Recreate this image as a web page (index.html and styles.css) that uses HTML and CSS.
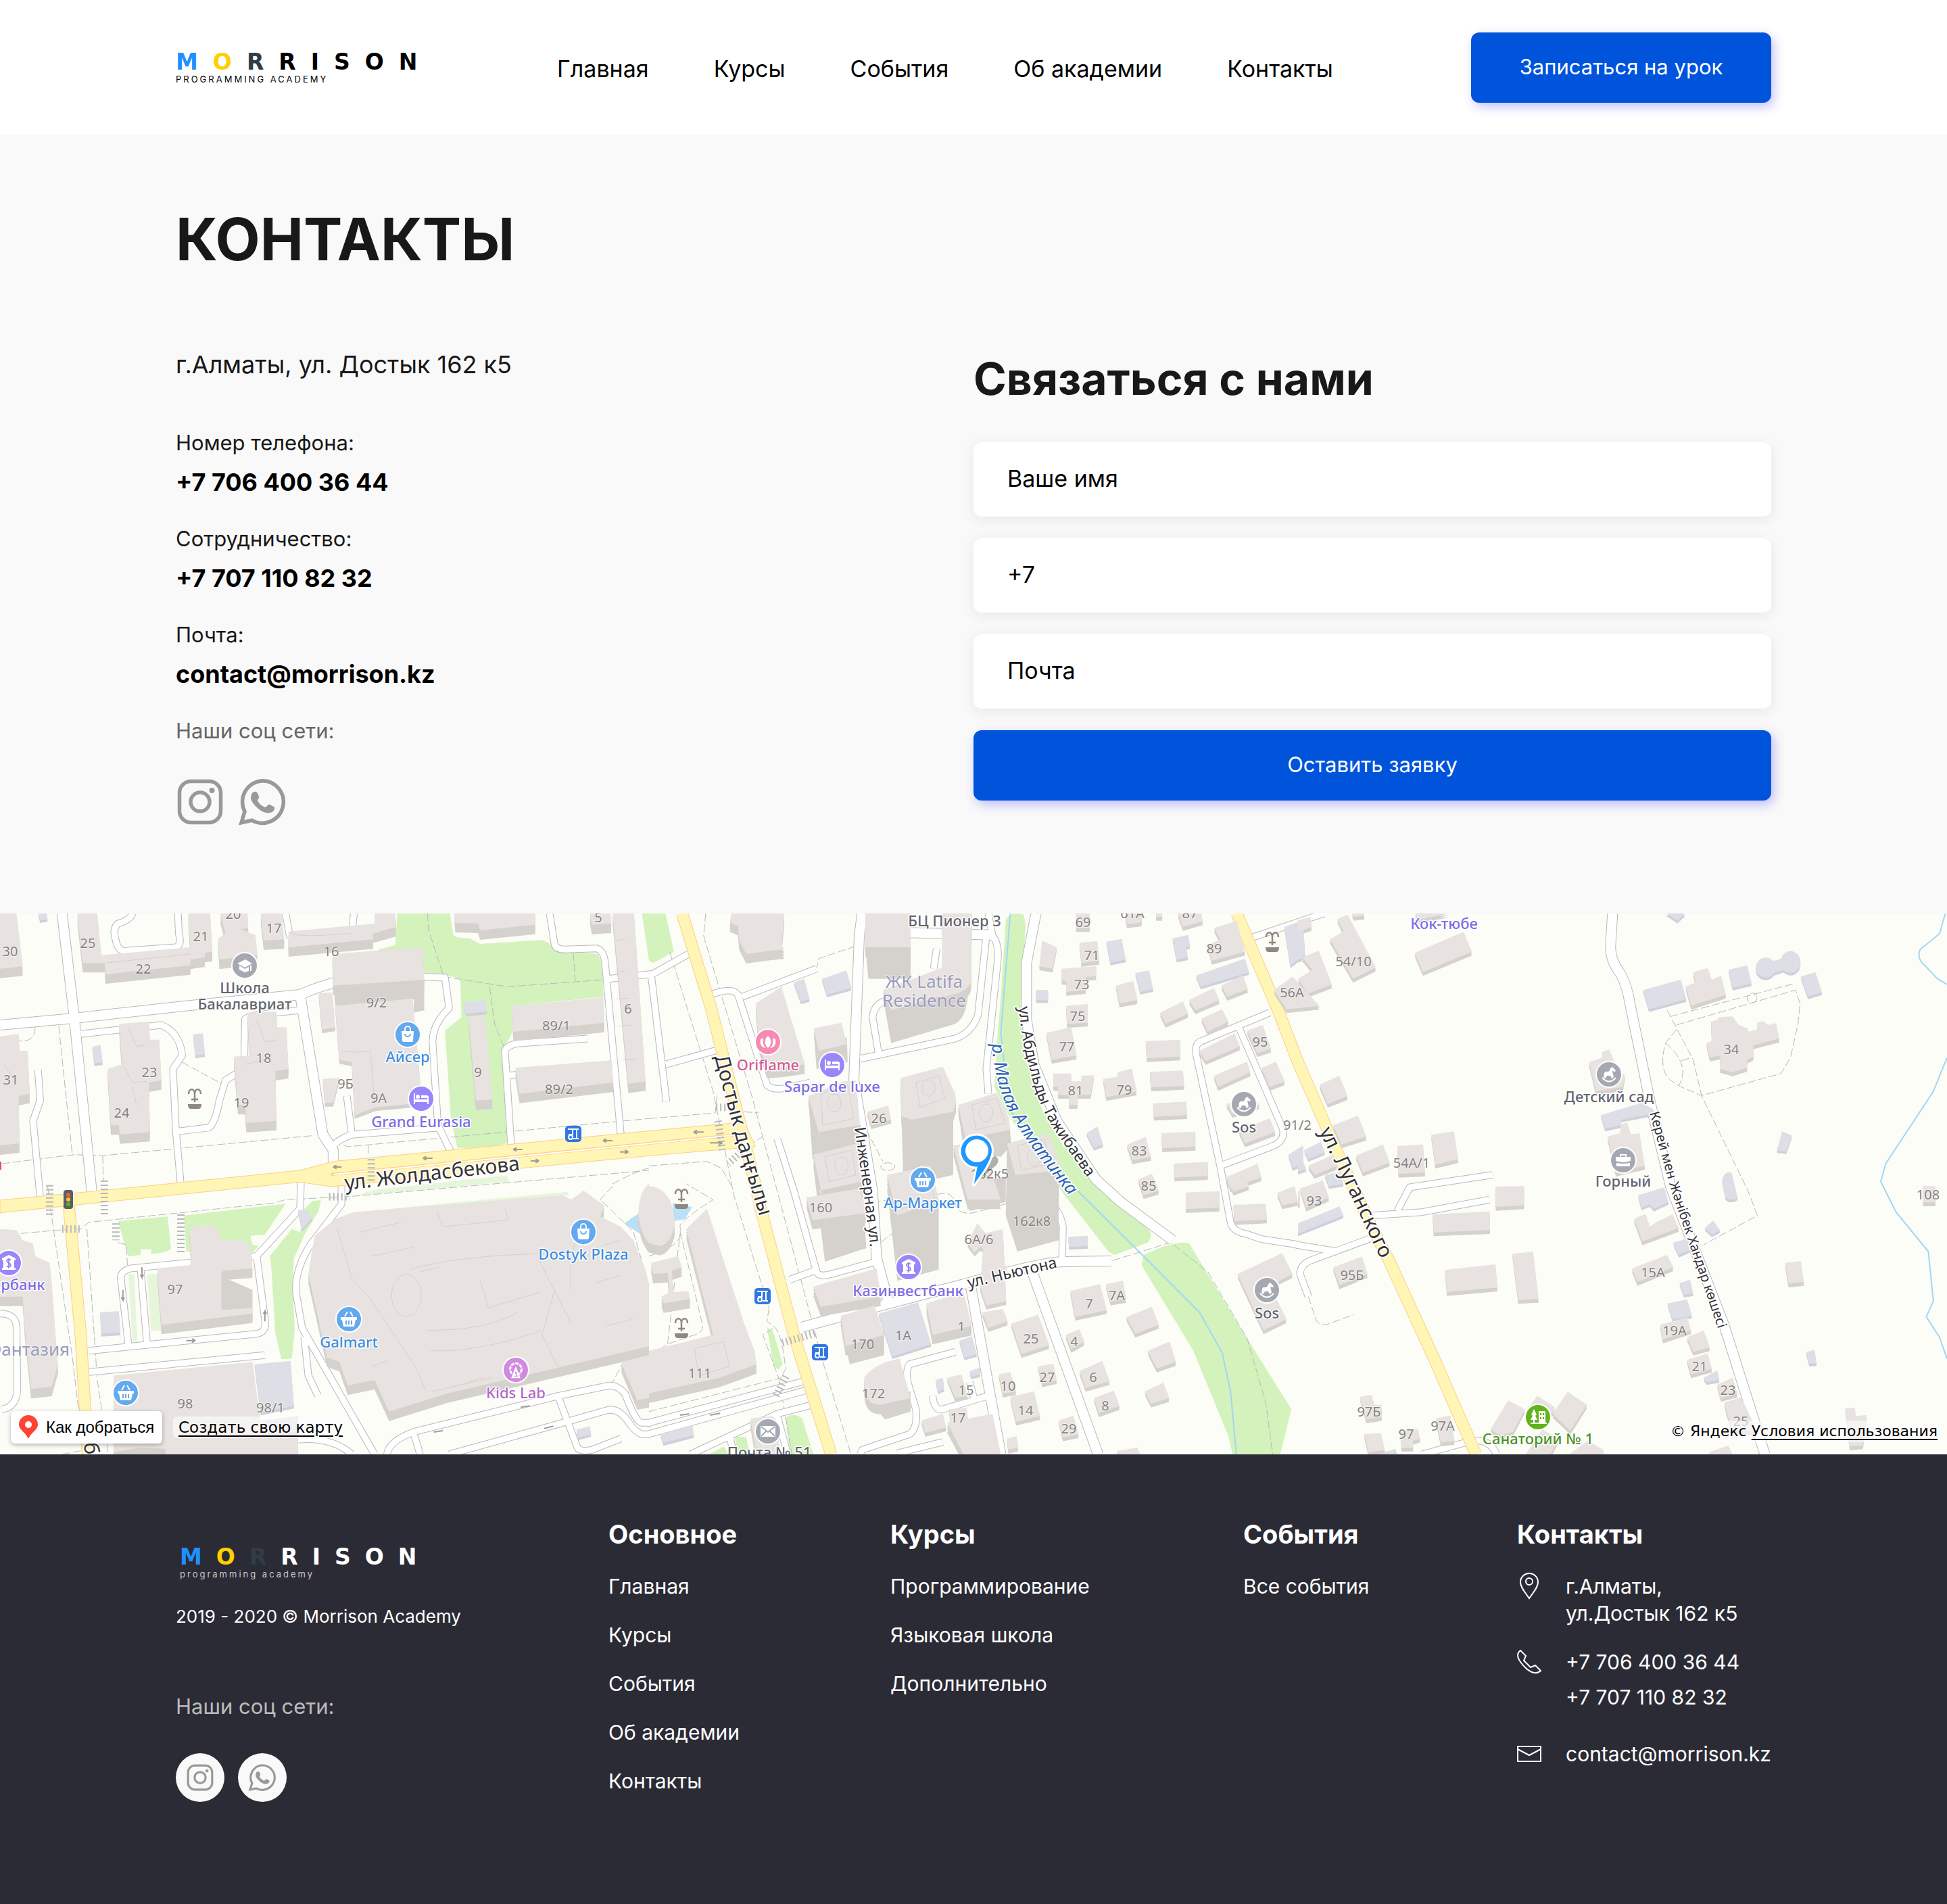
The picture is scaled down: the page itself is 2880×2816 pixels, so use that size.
FILE: index.html
```html
<!DOCTYPE html>
<html lang="ru">
<head>
<meta charset="utf-8">
<meta name="viewport" content="width=device-width, initial-scale=1">
<title>Контакты — Morrison Academy</title>
<link rel="stylesheet" href="styles.css">
</head>
<body>
<svg class="sprite" aria-hidden="true">
  <symbol id="i-instagram" viewBox="0 0 72 72"><g fill="none" stroke="currentColor"><rect x="5.500" y="5.500" width="61" height="61" rx="17" stroke-width="5.500"/><circle cx="36" cy="36" r="14" stroke-width="5.500"/></g><circle cx="53.500" cy="19" r="4" fill="currentColor"/></symbol>
  <symbol id="i-whatsapp" viewBox="0 0 72 72"><path d="M36 4.700a31.300 31.300 0 1 1-15.500 58.500L5 66.700l5-16.500A31.300 31.300 0 0 1 36 4.700Z" fill="none" stroke="currentColor" stroke-width="5.500"/><path d="M21 23c2-3 6-3 8 0l2 5c1 2-2 4-2 6 2 5 7 8 11 10 3 0 4-5 7-4l6 3c2 1 1 5 0 6-3 3-7 4-12 3-9-2-22-15-22-22 0-3 1-5 2-7Z" fill="currentColor"/></symbol>
  <symbol id="p-bag" viewBox="-18 -18 36 36"><path fill="#fff" d="M-9-5H9L8 9q0 2-2 2H-6q-2 0-2-2Z"/><path fill="none" stroke="#fff" stroke-width="2" d="M-4-5v-3a4 4 0 0 1 8 0v3"/><path fill="none" stroke="#62a9ee" stroke-width="2" d="M-4-1a4 4 0 0 0 8 0"/></symbol>
  <symbol id="p-basket" viewBox="-18 -18 36 36"><path fill="#fff" d="M-12-3H12V1H10L8 11H-8L-10 1h-2Z"/><path stroke="#fff" stroke-width="2" d="M-6-4l4-7M6-4l-4-7"/><path stroke="#62a9ee" stroke-width="2" d="M-4 2v6M0 2v6M4 2v6"/></symbol>
  <symbol id="p-bed" viewBox="-18 -18 36 36"><path fill="#fff" d="M-11-8h2V1H9v-5h2V8H9V5H-9v3h-2ZM0-5h8q3 0 3 4H0Z"/><circle cx="-5" cy="-3" r="3" fill="#fff"/></symbol>
  <symbol id="p-bank" viewBox="-18 -18 36 36"><path fill="#fff" d="M-10-7L0-12 10-7v3H8V7h2v3h-20V7h2V-4h-2Z"/><path fill="none" stroke="#9a86fb" stroke-width="2" d="M3-4C2-6-3-6-3-3S3 0 3 3-2 6-3 4M0-7V8"/></symbol>
  <symbol id="p-cap" viewBox="-18 -18 36 36"><path fill="#fff" d="M-11-3L1-9 11-3 0 3ZM-8 0l8 5 6-3v6L0 10l-8-4ZM8 0h2v8H8Z"/></symbol>
  <symbol id="p-horse" viewBox="-18 -18 36 36"><path fill="#fff" d="M2-9l3-2 5 5-1 2-4-1 2 9-3 2-2-4h-5l-2 4-3-1 1-7q1-3 5-2 3 0 4-5Z"/><path fill="none" stroke="#fff" stroke-width="2" d="M-10 5q10 11 20 0"/></symbol>
  <symbol id="p-case" viewBox="-18 -18 36 36"><path fill="#fff" d="M-11-5h22V1L2 3H-2l-9-2ZM-10 4l8 1h4l8-1v5h-20Z"/><path fill="none" stroke="#fff" stroke-width="2" d="M-4-5v-3h8v3"/></symbol>
  <symbol id="p-mail" viewBox="-18 -18 36 36"><path fill="#fff" d="M-11-8h22V8h-22Z"/><path fill="none" stroke="#a4a9b1" stroke-width="2" d="M-10-7L0 1 10-7M-10 7l7-7M10 7L3 0"/></symbol>
  <symbol id="p-wheel" viewBox="-18 -18 36 36"><circle cy="-1" r="8.500" fill="none" stroke="#fff" stroke-width="3" stroke-dasharray="5 1.500"/><path fill="none" stroke="#fff" stroke-width="2.500" d="M-5 11L0-2 5 11Z"/></symbol>
  <symbol id="p-tulip" viewBox="-18 -18 36 36"><path fill="#fff" d="M0-9q9 9 0 18Q-9 0 0-9ZM-7-6q-2 10 4 15-10-1-8-13ZM7-6q2 10-4 15 10-1 8-13Z"/></symbol>
  <symbol id="p-park" viewBox="-18 -18 36 36"><path fill="#fff" d="M-6-12l4 8-2 2 3 6h-4v4h6V-9H11V8h2v2h-24V8h4V4h-4l3-6-2-2Z"/><path stroke="#62b31b" stroke-width="2" stroke-dasharray="3 3" d="M4-6V5M8-6V5"/></symbol>
  <symbol id="p-fountain" viewBox="-15 -20 30 40"><path fill="none" stroke="#8f8781" stroke-width="2.500" d="M-9-6c0-9 9-9 9 0v12M9-6c0-9-9-9-9 0M-5 2H5"/><path fill="#8f8781" d="M-10 9h20q0 7-4 7H-6q-4 0-4-7Z"/></symbol>
  <symbol id="p-bus" viewBox="-12 -12 24 24"><rect x="-12" y="-12" width="24" height="24" rx="5" fill="#3176e3"/><path fill="none" stroke="#fff" stroke-width="2" d="M-8-7H8M5-7V6M0 7h8M-1-7v8h-6"/><circle cx="-4" cy="5" r="3" fill="none" stroke="#fff" stroke-width="2"/></symbol>
</svg>

<header class="header">
  <div class="container header-row">
    <a class="logo" href="#"><span class="logo-name"><span class="c-blue">M</span><span class="c-yellow">O</span><span class="c-slate">R</span>RISON</span><span class="logo-sub">PROGRAMMING ACADEMY</span></a>
    <nav class="nav">
      <a href="#">Главная</a><a href="#">Курсы</a><a href="#">События</a><a href="#">Об академии</a><a href="#">Контакты</a>
    </nav>
    <button class="btn" type="button">Записаться на урок</button>
  </div>
</header>

<main class="main">
  <div class="container">
    <h1 class="title">КОНТАКТЫ</h1>
    <div class="contact-row">
      <section class="info">
        <p class="address">г.Алматы, ул. Достык 162 к5</p>
        <dl class="details">
          <dt>Номер телефона:</dt><dd><a href="tel:+77064003644">+7 706 400 36 44</a></dd>
          <dt>Сотрудничество:</dt><dd><a href="tel:+77071108232">+7 707 110 82 32</a></dd>
          <dt>Почта:</dt><dd><a href="mailto:contact@morrison.kz">contact@morrison.kz</a></dd>
        </dl>
        <p class="social-title">Наши соц сети:</p>
        <div class="social">
          <a href="#" aria-label="Instagram"><svg><use href="#i-instagram"/></svg></a>
          <a href="#" aria-label="WhatsApp"><svg><use href="#i-whatsapp"/></svg></a>
        </div>
      </section>
      <form class="form">
        <h2>Связаться с нами</h2>
        <input type="text" aria-label="Ваше имя" placeholder="Ваше имя">
        <input type="tel" aria-label="Телефон" value="+7">
        <input type="email" aria-label="Почта" placeholder="Почта">
        <button class="btn" type="submit">Оставить заявку</button>
      </form>
    </div>
  </div>
</main>

<section class="map" aria-label="Карта">
<svg class="map-svg" viewBox="0 0 2880 800" preserveAspectRatio="xMidYMid slice">
<g class="geo" transform="scale(.61224 .33333) translate(0 -30)">
  <g fill="#d3f2bc">
    <path d="M960 30H1087L1095 125Q1100 140 1135 140L1160 165 1310 148Q1330 160 1340 195L1445 210 1455 260 1458 400 1237 440V560L1215 640 1225 1050Q1180 1072 1105 1070L1090 950 1075 550 1115 490 1112 320 1070 300 940 280Q915 270 915 190L955 170Z"/>
    <path d="M1551 30H1608L1628 200 1578 250 1568 240Z"/>
    <g transform="translate(1568 0)"><path d="M862 60Q870 20 905 35L910 80 900 400 905 650 950 900 1000 1060 1110 1240 1205 1430Q1220 1455 1205 1490L1125 1545 1110 1530 1000 1270 930 1090 860 900 835 800 840 620 850 400Z"/><path d="M1240 1510Q1290 1480 1305 1495L1445 1915 1552 2230 1525 2430H1410L1400 2350 1315 1970 1190 1590 1195 1545Z"/>
      <path d="M285 1865L300 1885 323 2030 312 2055 300 2030ZM330 2270Q345 2240 370 2270L397 2430H342ZM208 2350L235 2355 243 2430H212ZM145 2430L180 2395 193 2430Z"/></g>
    <g transform="translate(0 1230)"><path d="M285 165L405 145 413 285Q410 305 365 310V290H340V315L310 322ZM445 140L690 88 640 225 605 230 610 270 625 275 610 305 450 300ZM755 75L775 72 770 120 740 210 710 330 707 450 712 650 705 775 680 778 665 660 655 350 652 320 705 200 725 215 730 160 720 140Z"/><path fill="#e6f6db" d="M355 400L380 400 390 650 365 650ZM860 52L900 28 1225-38 1230-10ZM860 130L1000 100 1370 35 1375 50 960 120ZM310 400h14l8 300h-12Z"/></g>
  </g>
  <g fill="#b8e0f7"><path d="M1568 1330L1508 1405 1545 1450 1568 1440ZM1625 1315L1672 1333 1655 1385 1628 1395Z"/></g>
  <g class="stream">
    <path d="M2441 30L2418 560 2438 900 2598 1250 2768 1560 2898 1800 2953 1980 2973 2150 2987 2430M4700 30L4686 120 4639 190Q4630 230 4650 260L4681 320 4704 345M4704 670L4671 820 4556 1140 4544 1220 4581 1355 4659 1530 4671 1750 4654 1820 4686 1910 4704 2005"/>
  </g>
  <g class="foot">
    <path d="M1033 30L1035 100 1072 310 1225 355 1568 310M1385 205L1390 330M1183 355L1195 520 1217 620M440 690L535 785M142 530L160 850 175 1105M5 1140L180 1100 245 1105 760 1015M248 1105L250 1220M805 1040L840 1065 1220 1000 1568 940M85 535Q85 590 60 595L0 600M890 1060V1100M50 1450L140 1435 195 1430 215 1400 660 1315 690 1300 850 1285 1568 1170M115 1240L130 1440 175 2000 190 2240M210 1430L235 2100 262 2430M285 1490L305 1500 308 1590M1480 1230Q1540 1170 1568 1160M1480 1240L1450 1300 1530 1440 1555 1600 1568 1680M1568 2010L1500 2040 1480 2110M150 2430L205 2410"/>
    <g transform="translate(1568 0)"><path d="M137 30L132 130 250 850 420 2020 488 2430M50 200L155 820 205 1280 290 1780M0 940L160 915 165 830M500 175L410 230 405 270M230 910L265 915M0 1150L140 1130 175 1160 200 1240M240 1060L275 1020M525 990L565 1130M540 1310Q640 1290 720 1270Q740 1290 740 1320 750 1380 800 1350L940 1280M560 1490L700 1290M1120 1570L1260 1490 1350 1620 1445 1915 1490 2200 1507 2430M0 1550Q90 1500 75 1420 70 1400 155 1300L90 1230M75 1440L130 1860Q130 1890 110 1900L45 1940 0 2000M45 1940L75 1450M290 1780L285 1840 300 1860Q320 1880 330 2050L320 2090 0 2240M300 1870L275 1900 315 2100 345 2430"/><circle cx="577" cy="1153" r="17"/></g>
    <g transform="translate(3136 0)"><path d="M892 460L955 680 975 838 1167 740 1190 670 1208 520 1213 430 1202 370 910 527M1195 343L900 487M915 545L888 605Q870 720 900 770L920 795 975 838 1087 1260 1110 1370 980 1500M888 605Q950 700 920 795M927 683L950 670M25 1730L45 1840Q60 1865 75 1850L135 1810"/><ellipse cx="1097" cy="405" rx="12" ry="22"/></g>
  </g>
  <defs>
    <g id="r-small">
      <path d="M195 565L390 525Q435 560 440 660L418 720 425 995 437 1240M425 998L505 980Q520 960 530 860L545 770 590 720 592 500Q595 480 725 460M838 840L850 1010M805 1060Q820 1030 850 1012L1060 980M1328 30L1340 170Q1345 190 1365 190L1440 185Q1458 190 1462 250L1500 1015M1235 1065L1220 640Q1225 610 1260 605L1420 585M1228 750L1250 745M1470 320L1578 298 1663 210M1573 300L1610 865M1608 700L1735 635M320 30Q315 60 285 75 270 100 280 150 285 205 310 195L425 180Q440 170 432 120L430 30M690 30L700 130Q710 150 740 145L850 120 855 30M92 725L97 860 80 950 98 1310M870 312Q900 300 1075 315L1085 450Q1045 520 1045 600L1058 970 1090 1090"/>
      <g transform="translate(1568 0)"><path d="M225 400L405 275M150 390Q200 355 215 390L285 790Q295 815 330 805L390 780M820 30L830 130Q845 160 843 230L815 720 820 830M815 130L795 480Q780 560 740 585L510 675M555 655L540 490Q545 430 570 420M695 185L688 275M340 1655L400 1615M310 1030L350 1260 405 1620Q410 1645 440 1630L550 1575M998 1580L1000 1420Q995 1360 970 1310M740 1975L630 2030Q620 2050 625 2110L645 2230Q650 2310 630 2340L515 2410 510 2430M685 2170Q690 2240 710 2230L820 2170M775 2110L785 2180M710 2375L600 2425M385 2100L-5 2292M390 2140L-5 2342M395 2210L310 2250 100 2430M310 2260L335 2430M195 2350L205 2430M1460 135L1630 30M1500 470L1330 600Q1315 620 1325 680L1380 1150 1405 1400Q1410 1440 1440 1450L1480 1475 1570 1500M1425 535L1530 980Q1540 1030 1510 1060L1380 1150"/></g>
      <g transform="translate(3136 0)"><path d="M-5 1500L95 1530M185 1465L30 1570Q5 1590 5 1630L25 1730M180 1370L300 1355 462 1300M240 1350L270 1245 470 1190M300 2430L410 2375Q460 2350 480 2430"/></g>
      <g transform="translate(0 1230)"><path d="M727-10L725 110 620 320 315 375Q290 390 292 420L310 710M825-10V90L750 270Q712 380 715 480L730 640 905 1200M735 680L745 850 768 940M340 380L355 705M620 320L640 600Q645 660 620 665L215 740M215 835L640 760M0 575Q40 575 40 640L42 900Q42 990 5 1000M1573 1060L1550 1060Q1535 1055 1510 930 1490 890 1470 895L1350 940 1000 1100Q940 1140 935 1200M1573 1112L1550 1110Q1535 1100 1520 1060 1495 990 1465 1005L1370 1055 1085 1200M1350 950L1395 1170Q1400 1190 1430 1180L1500 1130M1000 1110L1015 1200M720 1135Q800 1120 850 1200M600 1150V1200"/></g>
    </g>
    <g id="r-mid">
      <path d="M150 30L178 470 205 960 222 1270M0 525L178 495 450 440 725 390Q800 330 880 310M725 390L780 1010 805 1080 805 1150"/>
      <g transform="translate(1568 0)"><path d="M515 30L508 130 495 770 540 1260 550 1560 580 1765M530 110L830 125M935 30L912 250 912 500 930 700 985 950 1080 1210 1140 1310 1265 1480M370 1865L580 1760 760 1675Q940 1580 1000 1575L1117 1572M778 1690L850 2430M920 1590L1085 2430"/></g>
      <g transform="translate(3136 0)"><path d="M760 30L755 180Q755 240 780 300 795 350 802 430L850 860 900 1240 1030 1860 1128 2430"/></g>
    </g>
    <g id="r-yellow">
      <path d="M165 1300L195 1900 212 2430M1648 30L1718 450 1818 1180 1838 1340 1918 1900 2008 2430M2988 30L3088 460 3136 690 3236 1110 3306 1390 3356 1570 3466 2010 3566 2430"/>
    </g>
    <g id="b-tall">
      <path d="M0 30H40L55 265 0 275ZM187 30H235L245 215 460 180 455 30H508L513 200 495 205V225L460 235V260L255 300 253 250 200 250ZM532 30H598L600 95 580 100 617 125 622 215 530 235 527 140 545 120ZM630 30H680L687 145 637 150ZM697 110L905 75V30H955L957 90 900 120 902 145 697 180ZM803 210L1022 180 1025 325 805 350ZM288 520L360 510 362 590 385 590 390 770 360 780 362 1000 290 1010 287 970H268L260 720 295 700ZM597 470L668 465 670 535H692L697 720 665 730 668 950 595 960 592 880H575L565 665 605 660ZM0 575L45 565 47 640H67L72 830 45 840 47 1050 0 1060ZM1132 490L1172 485 1190 855 1150 860ZM1237 440L1458 402 1460 515 1240 555ZM1245 715L1478 682 1482 780 1255 830ZM1480 30H1532L1560 775 1518 785ZM1425 30H1475L1477 75 1430 80ZM1098 30H1293V80L1160 105 1155 75 1100 72Z"/>
      <g transform="translate(1568 0)"><path d="M199 30H327L320 170 327 190 295 195 235 210 218 150 215 85 195 70ZM258 430L320 355 350 540 377 700 320 715 285 720 265 600ZM398 540L465 515 478 610 410 640ZM523 30H632V180H523ZM708 30H780L778 330Q770 390 700 400L585 460 565 370 710 270ZM385 840L470 775 500 770 510 970 410 1000ZM608 760L710 710 740 830 742 870 735 910 635 945 610 930ZM747 880L840 825 870 940 872 990 765 1030ZM865 1050L965 1005 990 1120V1170L885 1190ZM397 1100L505 1050 515 1220 410 1260 418 1280ZM575 1190L680 1150 700 1300 600 1370ZM463 1815L545 1770 568 1900 475 1950ZM520 2090Q540 2030 605 2005L632 2180 560 2210Q520 2210 520 2120ZM245 2270L300 2260 320 2430H260ZM735 1060L800 1040 850 1300 770 1300Z"/></g>
      <g transform="translate(0 1230)"><path d="M0 200L40 205 55 250 80 265 85 320 120 350 125 440 135 690 140 800 125 900 75 910 60 640 55 500 0 500ZM380 375L460 360 535 375V560L610 550V575L390 625ZM458 200Q470 180 520 185L535 250 590 250 607 275 610 375 540 385 480 500 465 480ZM760 230L810 155 855 125 950 110 1360 50 1380 70 1410 30 1460 95 1450 145 1500 190 1530 250 1560 380 1568 450V720L1500 750 1080 930 940 1010 905 870 840 895 820 790 790 770 745 400ZM275 850L610 790 640 1200 340 1170 275 1190ZM1542 130Q1545 30 1568 0V265Q1545 210 1542 130ZM1500 790L1568 760V950L1540 960ZM400 1140H430L540 1120 720 1110V1200H400Z"/></g>
      <g transform="translate(1568 1230)"><path d="M0 10Q30 10 50 70 62 120 62 190 50 270 25 275L0 262ZM90 200L140 110 230 620 255 740 260 800 170 860 0 930V780L0 740 155 670ZM5 350L70 320 80 370 55 385 60 480 95 475 100 510 35 530 30 500 50 480 45 395 10 400ZM380 60L510 20 525 130 395 160ZM397 455L550 375 560 500 415 545ZM670 530L760 480 780 630 685 670ZM720 1060L830 1020 850 1200H760Z"/></g>
    </g>
    <g id="b-low">
      <path d="M770 385L803 380 810 535 778 545ZM780 765L820 760 805 870 785 870ZM810 440L997 408 1020 870 907 890 857 925 850 690 820 680Z"/>
      <g transform="translate(1568 0)"><path d="M1032 30H1065V95H1032ZM1150 30H1190V70L1155 78ZM1278 30H1335L1338 65 1290 90ZM1225 30h15v15h-15ZM950 150L985 180 975 275 943 265ZM1040 160L1083 153 1088 240 1045 250ZM1365 95L1420 62 1430 130 1440 200 1360 240 1350 170 1380 145ZM997 275L1080 265V308L1055 312V370L1008 378V330L997 328ZM1128 350L1170 330 1180 415 1137 430ZM1235 470L1290 420 1303 475 1248 520ZM1305 415L1365 360 1378 415 1320 460ZM1335 495L1385 455 1400 510 1350 555ZM1383 350L1435 305 1447 365 1397 400ZM1008 440L1060 432V515L1010 520ZM960 560L1020 535 1033 660 973 680ZM1200 597L1283 590V665L1203 672ZM1330 640L1415 562 1428 620 1345 685ZM1445 550L1483 525 1503 630 1470 650ZM1210 733L1290 727 1293 795 1213 802ZM1365 750L1445 688 1453 735 1375 800ZM1480 715L1515 688 1536 775 1500 800ZM977 740H1020V775H1045V750L1075 748 1067 835H1035V880H1015V835H988V800H977ZM1097 765L1132 755V735L1167 718 1178 820 1105 845ZM1218 873L1298 865 1300 925 1220 932ZM1395 875L1460 840 1475 880 1410 920ZM1425 990L1500 940 1513 1000 1440 1050ZM1238 1005L1320 998V1065L1240 1072ZM1155 1055L1200 1022 1213 1110 1168 1125ZM1268 1140L1350 1132V1195L1270 1202ZM1395 1200L1470 1140 1480 1200 1405 1250ZM1182 1210L1215 1185 1232 1260 1195 1280ZM527 910L578 883 585 945 537 970ZM1510 370L1555 310 1620 440 1540 455Z"/></g>
      <g transform="translate(3136 0)"><path d="M0 60L30 45 33 90 0 110ZM95 55L120 35 188 270 133 320 77 145 110 110ZM130 30H160V40L135 45ZM10 225L50 195 82 345 25 385 0 320 35 280ZM283 30H365L290 58ZM282 205L400 112 420 200 302 290ZM955 290L990 272 1000 325 1022 305 1034 390 950 440 937 355 960 335ZM998 510L1015 500V490L1050 487 1065 525 1087 540V555L1110 545V512L1125 508 1135 525 1155 517 1163 585 1100 615V665L1085 680V715L1050 735 1020 720V660L995 670 987 605 1000 595ZM703 690L735 670V645L752 633 765 690 790 750 785 800 720 820ZM52 790L100 750 120 840 72 875ZM85 970L145 927 165 1020 105 1055ZM140 1105L205 1055 222 1135 157 1180ZM240 1062L302 1055 307 1180 243 1185ZM322 1012L377 997 387 1120 332 1145ZM748 1020L778 1005 780 965 795 957 805 1010 825 1005 838 1150 768 1180ZM477 1242L546 1240V1325L478 1332ZM325 1365L463 1352 464 1435 328 1445ZM25 1150L85 1100 95 1150 40 1190ZM5 1250L60 1215 75 1290 20 1335ZM355 1612L477 1587 482 1690 360 1710ZM518 1540L568 1530 581 1740 532 1745ZM812 1385L840 1362 850 1420 865 1400 905 1365 920 1425 832 1485ZM807 1605L892 1545 907 1600 820 1665ZM85 1600L155 1552 168 1630 100 1680ZM875 1855L940 1822 950 1880 882 1920ZM940 1910L980 1880 995 1955 955 1975ZM940 2010L990 1983 1000 2050 950 2075ZM1013 2120L1050 2090 1062 2160 1022 2180ZM1030 2200L1070 2178 1090 2250 1110 2330 1050 2320 1035 2240ZM1177 1580L1215 1573 1222 1665 1185 1672ZM1510 1240h30v72h-30ZM1322 2225L1345 2223 1348 2260 1374 2255 1365 2390 1333 2395ZM150 2175L177 2165 185 2210 202 2210V2265L165 2275ZM160 2340L200 2335 210 2410 170 2420ZM248 2330L290 2315 295 2360 278 2370V2400H250ZM333 2270L368 2258 378 2370 345 2378ZM465 2320L508 2190 548 2230 520 2330 490 2345ZM555 2230L578 2170 620 2220 618 2240 600 2260 552 2270ZM615 2250L652 2152 698 2210 658 2325ZM550 2430L590 2320 630 2360 610 2430ZM655 2430L700 2370 738 2410V2430ZM993 2420L1040 2390 1050 2430H993ZM0 1260h4v60h-4Z"/></g>
      <g transform="translate(1568 1230)"><path d="M770 265L793 175 837 270 820 300 800 280 787 305ZM810 220L855 200 863 520 815 540 800 460ZM808 355L855 325 867 395 820 425ZM805 570L855 555 867 610 820 640ZM875 620L940 580 967 715 900 755ZM1018 475L1090 445 1106 560 1030 590ZM1104 445L1145 430 1153 510 1115 522ZM1007 670L1040 645 1052 700 1020 732ZM1153 590L1215 545 1232 625 1175 665ZM1040 830L1095 785 1113 875 1055 905ZM1205 740L1258 700 1273 790 1227 820ZM845 845L873 835 887 920 855 930ZM940 810L977 797 985 870 950 885ZM873 945L930 920 945 1030 887 1055ZM1075 950L1123 917 1137 985 1087 1018ZM1198 920L1243 882 1257 950 1213 975ZM990 1050L1025 1028 1038 1110 1000 1125ZM865 1130L888 1120 892 1170 868 1180ZM658 1050L710 1020 718 1080 668 1105ZM725 1000L767 992 772 1055 730 1070ZM720 860L755 845 770 940 740 950ZM1130 1185L1180 1170 1187 1200H1135ZM1297 38L1378 33V105L1297 112ZM1412 93L1490 88 1493 158 1415 165ZM1518 40L1560 10 1568 80 1530 95ZM1405 5L1440-20 1450 10 1412 35ZM1422 400L1530 307 1555 400 1500 450 1540 600 1485 650ZM150 640h4v4h-4Z"/></g>
    </g>
    <g id="b-lilac">
      <path d="M223 620L243 614 248 690 228 695ZM467 567L490 562 495 655 472 660ZM1120 425L1173 413 1177 465 1125 475ZM93 30H113L115 55 97 60ZM242 1800L287 1795 291 1890 245 1895ZM720 1345L740 1345 755 1380 730 1430ZM615 2030L702 2015 710 2215 630 2245ZM1393 2320L1425 2305 1428 2340 1398 2355ZM375 2335L720 2260V2330L375 2400Z"/>
      <g transform="translate(1568 0)"><path d="M350 335L375 320 388 410 367 420ZM418 320L477 283 489 360 430 390ZM1105 155L1142 143 1152 235 1115 248ZM1265 140L1303 125 1307 175 1298 180 1302 225 1275 235ZM1175 295L1208 282 1218 365 1187 378ZM1322 305L1440 230 1450 290 1333 355ZM935 370H964V415H935ZM1535 90L1580 60 1585 210 1550 260ZM1057 1005L1083 975 1097 1055 1075 1070ZM1013 1465L1060 1460V1505L1015 1510ZM555 1805L650 1755 682 1940 588 1995ZM750 1925L780 1905 792 1985 762 2000ZM775 2060L800 2045V2075L778 2085ZM693 2100L710 2090 713 2140 698 2150ZM28 2340L105 2300 108 2345 35 2380ZM1545 1100L1580 1060V1140L1555 1160Z"/></g>
      <g transform="translate(3136 0)"><path d="M0 140L15 190 10 230 0 235ZM834 370L925 323 938 410 848 455ZM1040 280L1085 260 1096 340 1050 360ZM1215 310L1250 290 1266 380 1232 398ZM732 925L830 870 860 900 850 920 780 945V970L742 985ZM1157 1080L1170 997 1193 1015 1180 1085ZM822 1280L885 1245 895 1310 860 1340 850 1320 830 1335ZM1025 1210Q1030 1170 1048 1180L1062 1290Q1045 1310 1033 1290ZM983 1425L1003 1392 1020 1435 1000 1455ZM907 1490L945 1470 950 1520 920 1545ZM922 1670L947 1655 955 1715 932 1722ZM893 1760L940 1742 952 1815 905 1830ZM1228 1975L1248 1967 1253 2025 1235 2028ZM980 2090L1013 2057 1018 2100 987 2110ZM0 1405L100 1330 110 1370 0 1450ZM15 1080L55 1043 65 1090 25 1120ZM0 1075L20 1165 0 1175ZM65 1190L100 1175 110 1230 75 1240ZM890 30H935L917 62ZM208 2420L235 2405 240 2430H210Z"/><ellipse cx="1130" cy="270" rx="24" ry="44"/><ellipse cx="1190" cy="245" rx="24" ry="48"/><path d="M1130 250L1190 220V270L1140 300Z"/></g>
    </g>
  </defs>
  <use href="#r-small" class="small-case"/><use href="#r-mid" class="mid-case"/>
  <use href="#r-small" class="small-fill"/><use href="#r-mid" class="mid-fill"/>
  <use href="#r-yellow" class="yellow-case"/>
  <path class="avenue" d="M0 1302L270 1255 725 1170 805 1130 1568 995 1798 955 1825 1065 1568 1105 900 1225 800 1242 725 1222 0 1358Z"/>
  <use href="#r-yellow" class="yellow-fill"/>
  <path class="median" d="M800 1188L1568 1050 1790 1010"/>
  <path class="median-light" d="M806 1188L1568 1051 1790 1011"/>
  <g class="cross">
    <path d="M120 1235V1370M252 1215V1370M897 1120V1225M280 1405V1480M437 1365V1540M1735 950L1745 1080M1790 1090L1760 1140"/>
    <path d="M150 1430H195M795 1287H845M1730 890H1770M1890 1935L1975 1890M1875 2170L1900 2080"/>
  </g>
  <g class="arrow">
    <path d="M825 1155H805l8-8M805 1155l8 8M1045 1116H1022l8-8M1022 1116l8 8M1262 1077H1240l8-8M1240 1077l8 8M1480 1038H1457l8-8M1457 1038l8 8M1282 1128H1302l-8-8M1302 1128l-8 8M1498 1088H1518l-8-8M1518 1088l-8 8M1700 1000H1676l8-8M1676 1000l8 8M1715 1048H1745l-8-8M1745 1048l-8 8M297 1700v45l-4-12M297 1745l4-12M343 1600v45l-4-12M343 1645l4-12M640 1840v-45l-4 12M640 1795l4 12M450 1925H472l-8-8M472 1925l-8 8M1280 2215l-22 6M1070 2325l-22 6M1315 2315l22-10M1665 2250l-22 6M1715 2256l25-8"/>
  </g>
  <g class="tall-shadow">
    <use href="#b-tall" y="14"/><use href="#b-tall" y="28"/><use href="#b-tall" y="42"/>
    <path d="M805 340L1025 320V460L1000 470V410L810 440Z"/>
    <path d="M465 1600L535 1560V1640L610 1700V1840L550 1845 540 1832 525 1855 480 1780Z"/>
    <g transform="translate(1568 0)"><path d="M523 180H632V320H530ZM565 400L770 330Q775 480 740 520L585 605ZM400 600L478 580 480 690 405 720ZM385 850L510 960 520 1060 395 1120ZM608 800L735 900V1190L615 1240ZM747 900L872 980 875 1060 850 1110 760 1080ZM397 1150L515 1200 525 1515 425 1575ZM575 1250L700 1300V1610L600 1660ZM865 1060L990 1160V1480L890 1530 862 1370ZM755 1230L862 1200V1310L775 1350ZM463 1850L568 1880V1990L485 2030ZM535 2200L632 2150V2240L570 2275Z"/></g>
  </g>
  <g class="low-shadow"><use href="#b-low" y="8"/><use href="#b-low" y="17"/></g>
  <g class="lilac-shadow"><use href="#b-lilac" y="6"/><use href="#b-lilac" y="12"/></g>
  <use href="#b-lilac" class="lilac"/><use href="#b-low" class="roof"/><use href="#b-tall" class="roof"/>
  <g class="seam">
    <path d="M310 540L330 620 350 615M300 710L320 780 355 775M620 500L640 600 668 590M590 700L640 680M320 800L330 880M825 640Q850 650 895 640L905 880M1485 150l25-5M1485 290l25-5M1490 410l30-5M1495 530l30-5M1505 680l30-5M10 700L30 760M700 115Q720 140 850 118M253 250L460 210"/>
    <path d="M815 1430L850 1650 895 1740 1000 2030 1030 2150M868 1445L970 1400M900 1550L1000 1510M1055 1350L1070 1420 1228 1390 1220 1340M990 1610Q1100 1550 1300 1540M1015 1620L1060 1600M1160 1660L1180 1780 1305 1710M1300 1560L1380 1850M1040 1970Q1150 1980 1310 1880M1030 1880Q1180 1880 1250 1800M1465 1860L1530 1830M900 2040L935 2015M1045 2150L1190 2090M1340 1700L1310 1900 1350 2050M1440 1670L1500 1635M1125 2115L1165 2090M1400 1420Q1370 1600 1380 1700M1460 1500L1500 1480"/>
    <ellipse cx="982" cy="1725" rx="36" ry="92"/>
    <g transform="translate(1568 0)"><ellipse cx="448" cy="870" rx="16" ry="40"/><ellipse cx="675" cy="805" rx="16" ry="36"/><ellipse cx="815" cy="915" rx="16" ry="40"/><ellipse cx="930" cy="1110" rx="16" ry="40"/><ellipse cx="465" cy="1150" rx="16" ry="40"/><path d="M415 830L480 790 495 940 420 970ZM645 780L700 750 715 850 655 890ZM780 880L840 850 860 960 790 990ZM890 1060L955 1030 970 1140 900 1170ZM425 1110L490 1080 500 1190 435 1220ZM635 1200L675 1180 690 1300 610 1340M110 1960L180 1930 195 2040 120 2080Z"/></g>
  </g>
</g>

<g class="num">
  <text x="15" y="63">30</text><text x="130" y="51">25</text><text x="212" y="89">22</text><text x="297" y="41">21</text><text x="345" y="8">20</text><text x="405" y="29">17</text><text x="490" y="63">16</text><text x="557" y="139">9/2</text><text x="511" y="259">9Б</text><text x="560" y="280">9А</text><text x="823" y="173">89/1</text><text x="827" y="267">89/2</text><text x="707" y="242">9</text><text x="929" y="148">6</text><text x="885" y="13">5</text><text x="390" y="221">18</text><text x="357" y="287">19</text><text x="221" y="242">23</text><text x="180" y="302">24</text><text x="16" y="253">31</text>
  <text x="1602" y="20">69</text><text x="1675" y="7">61А</text><text x="1760" y="7">87</text><text x="1615" y="69">71</text><text x="1600" y="112">73</text><text x="1594" y="159">75</text><text x="1578" y="204">77</text><text x="1591" y="269">81</text><text x="1663" y="268">79</text><text x="1796" y="59">89</text><text x="1911" y="124">56А</text><text x="1864" y="197">95</text><text x="1300" y="310">26</text><text x="1919" y="320">91/2</text><text x="1685" y="358">83</text><text x="1699" y="410">85</text><text x="1464" y="392">162к5</text>
  <text x="2002" y="78">54/10</text><text x="2561" y="208">34</text><text x="2088" y="376">54А/1</text><text x="2852" y="423">108</text>
  <text x="259" y="563">97</text><text x="274" y="732">98</text><text x="400" y="738">98/1</text>
  <text x="1214" y="442">160</text><text x="1526" y="462">162к8</text><text x="1448" y="489">6А/6</text><text x="1336" y="631">1А</text><text x="1422" y="618">1</text><text x="1276" y="644">170</text><text x="1292" y="717">172</text><text x="1035" y="687">111</text><text x="1611" y="584">7</text><text x="1652" y="572">7А</text><text x="1525" y="636">25</text><text x="1589" y="640">4</text><text x="1549" y="693">27</text><text x="1617" y="693">6</text><text x="1491" y="706">10</text><text x="1429" y="712">15</text><text x="1635" y="735">8</text><text x="1517" y="742">14</text><text x="1417" y="753">17</text><text x="1581" y="769">29</text>
  <text x="1944" y="432">93</text><text x="2000" y="542">95Б</text><text x="2445" y="538">15А</text><text x="2477" y="624">19А</text><text x="2514" y="677">21</text><text x="2556" y="712">23</text><text x="2575" y="758">25</text><text x="2025" y="744">97Б</text><text x="2134" y="765">97А</text><text x="2080" y="777">97</text>
</g>

<defs>
  <path id="s-zhol" d="M511 409L766 380"/>
  <path id="s-dostyk" d="M1057 212L1092 345 1127 460"/>
  <path id="s-inzh" d="M1264 317L1276 400 1288 500"/>
  <path id="s-tazh" d="M1507 138Q1512 195 1522 225 1535 285 1563 325L1622 410"/>
  <path id="s-river" d="M1467 193Q1473 265 1503 310 1520 342 1600 440"/>
  <path id="s-newton" d="M1433 554L1570 522"/>
  <path id="s-lug" d="M1951 322L1990 400 2056 540"/>
  <path id="s-kerey" d="M2440 295L2472 410 2550 640"/>
</defs>
<g class="street">
  <text class="st-l"><textPath href="#s-zhol">ул. Жолдасбекова</textPath></text>
  <text class="st-l"><textPath href="#s-dostyk">Достык даңғылы</textPath></text>
  <text class="st-s"><textPath href="#s-inzh">Инженерная ул.</textPath></text>
  <text class="st-s"><textPath href="#s-tazh">ул. Абдильды Тажибаева</textPath></text>
  <text class="st-river"><textPath href="#s-river">р. Малая Алматинка</textPath></text>
  <text class="st-s"><textPath href="#s-newton">ул. Ньютона</textPath></text>
  <text class="st-l"><textPath href="#s-lug">ул. Луганского</textPath></text>
  <text class="st-xs"><textPath href="#s-kerey">Керей мен Жәнібек Хандар көшесі</textPath></text>
  <text class="st-l" transform="translate(124 783) rotate(85)">б</text>
</g>

<g class="dot">
  <g fill="#a4a9b1"><circle cx="362" cy="77" r="19"/><circle cx="1840" cy="282" r="19"/><circle cx="1874" cy="557" r="19"/><circle cx="1136" cy="766" r="19"/><circle cx="2380" cy="238" r="19"/><circle cx="2401" cy="365" r="19"/></g>
  <g fill="#62a9ee"><circle cx="603" cy="179" r="19"/><circle cx="516" cy="600" r="19"/><circle cx="863" cy="471" r="19"/><circle cx="186" cy="709" r="19"/><circle cx="1365" cy="394" r="19"/></g>
  <g fill="#9a86fb"><circle cx="623" cy="274" r="19"/><circle cx="13" cy="517" r="19"/><circle cx="1231" cy="224" r="19"/><circle cx="1344" cy="523" r="19"/></g>
  <circle cx="763" cy="675" r="19" fill="#d18ae0"/><circle cx="1136" cy="190" r="19" fill="#f58ab3"/><circle cx="2275" cy="745" r="19" fill="#62b31b"/>
</g>
<g>
  <use href="#p-cap" x="344" y="59" width="36" height="36"/><use href="#p-horse" x="1822" y="264" width="36" height="36"/><use href="#p-horse" x="1856" y="539" width="36" height="36"/><use href="#p-mail" x="1118" y="748" width="36" height="36"/><use href="#p-horse" x="2362" y="220" width="36" height="36"/><use href="#p-case" x="2383" y="347" width="36" height="36"/>
  <use href="#p-bag" x="585" y="161" width="36" height="36"/><use href="#p-basket" x="498" y="582" width="36" height="36"/><use href="#p-bag" x="845" y="453" width="36" height="36"/><use href="#p-basket" x="168" y="691" width="36" height="36"/><use href="#p-basket" x="1347" y="376" width="36" height="36"/>
  <use href="#p-bed" x="605" y="256" width="36" height="36"/><use href="#p-bank" x="-5" y="499" width="36" height="36"/><use href="#p-bed" x="1213" y="206" width="36" height="36"/><use href="#p-bank" x="1326" y="505" width="36" height="36"/>
  <use href="#p-wheel" x="745" y="657" width="36" height="36"/><use href="#p-tulip" x="1118" y="172" width="36" height="36"/><use href="#p-park" x="2257" y="727" width="36" height="36"/>
  <use href="#p-fountain" x="273" y="253" width="30" height="40"/><use href="#p-fountain" x="1867" y="21" width="30" height="40"/><use href="#p-fountain" x="993" y="401" width="30" height="40"/><use href="#p-fountain" x="993" y="592" width="30" height="40"/>
  <use href="#p-bus" x="836" y="314" width="24" height="24"/><use href="#p-bus" x="1116" y="554" width="24" height="24"/><use href="#p-bus" x="1201" y="637" width="24" height="24"/>
  <rect x="94" y="409" width="14" height="28" rx="4" fill="#5b5d66"/><circle cx="101" cy="416" r="3" fill="#f05a4a"/><circle cx="101" cy="423" r="3" fill="#f4c430"/><circle cx="101" cy="430" r="3" fill="#59b02c"/>
  <rect x="-4" y="367" width="6" height="12" fill="#e64b57"/>
</g>
<g class="poi">
  <g fill="#62656f"><text x="362" y="118">Школа</text><text x="362" y="142">Бакалавриат</text><text x="1412" y="19">БЦ Пионер 3</text><text x="1840" y="324">Sos</text><text x="1874" y="599">Sos</text><text x="1138" y="805">Почта № 51</text><text x="2380" y="279">Детский сад</text><text x="2401" y="404">Горный</text></g>
  <g fill="#3e8ddd"><text x="603" y="220">Айсер</text><text x="516" y="642">Galmart</text><text x="863" y="512">Dostyk Plaza</text><text x="1365" y="436">Ар-Маркет</text></g>
  <g fill="#7c6ce4"><text x="623" y="316">Grand Eurasia</text><text x="14" y="557">Сбербанк</text><text x="1231" y="264">Sapar de luxe</text><text x="1343" y="566">Казинвестбанк</text><text x="2136" y="23">Кок-тюбе</text></g>
  <text x="763" y="717" fill="#b168c6">Kids Lab</text><text x="1136" y="232" fill="#d35c91">Oriflame</text><text x="2275" y="785" fill="#4a9128">Санаторий № 1</text>
</g>
<g class="estate"><text x="42" y="654">Фантазия</text><text x="1367" y="110">ЖК Latifa</text><text x="1367" y="138">Residence</text></g>

<g>
  <path d="M1443 398L1474 372Q1480 364 1472 358L1462 366Z" fill="#000" opacity=".3"/>
  <path d="M1445 327a24 24 0 0 1 22 32c-4 14-14 28-26 43l-2-1 5-25a24 24 0 0 1 1-49Z" fill="#1e98ff" stroke="#fff" stroke-width="3"/>
  <circle cx="1445" cy="351" r="17" fill="#fff"/>
</g>
</svg>
<a class="route" href="#"><svg viewBox="0 0 28 36"><path d="M14 0a14 14 0 0 1 14 14c0 8-9 10-14 21C9 24 0 22 0 14A14 14 0 0 1 14 0Z" fill="#ff4433"/><circle cx="14" cy="14" r="5" fill="#fff"/></svg>Как добраться</a>
<a class="create-map" href="#">Создать свою карту</a>
<p class="copyright-map">© Яндекс <a href="#">Условия использования</a></p>
</section>

<footer class="footer">
  <div class="container footer-grid">
    <div class="footer-brand">
      <a class="logo logo-light" href="#"><span class="logo-name"><span class="c-blue">M</span><span class="c-yellow">O</span><span class="c-slate">R</span>RISON</span><span class="logo-sub">programming academy</span></a>
      <p class="copy">2019 - 2020 © Morrison Academy</p>
      <p class="footer-social-title">Наши соц сети:</p>
      <div class="footer-social">
        <a href="#" aria-label="Instagram"><svg><use href="#i-instagram"/></svg></a>
        <a href="#" aria-label="WhatsApp"><svg><use href="#i-whatsapp"/></svg></a>
      </div>
    </div>
    <nav class="footer-col"><h3>Основное</h3><a href="#">Главная</a><a href="#">Курсы</a><a href="#">События</a><a href="#">Об академии</a><a href="#">Контакты</a></nav>
    <nav class="footer-col"><h3>Курсы</h3><a href="#">Программирование</a><a href="#">Языковая школа</a><a href="#">Дополнительно</a></nav>
    <nav class="footer-col"><h3>События</h3><a href="#">Все события</a></nav>
    <div class="footer-col">
      <h3>Контакты</h3>
      <div class="line"><svg viewBox="0 0 36 40"><path d="M18 38C12 29 5 22 5 14a13 13 0 0 1 26 0c0 8-7 15-13 24Z"/><circle cx="18" cy="13" r="5"/></svg><address>г.Алматы,<br>ул.Достык 162 к5</address></div>
      <div class="line phones"><svg viewBox="0 0 36 40"><path d="M5 3L13 11 10 18 20 28 27 25 35 33C29 39 20 36 12 28 2 18-3 9 5 3Z"/></svg><div><a href="tel:+77064003644">+7 706 400 36 44</a><a href="tel:+77071108232">+7 707 110 82 32</a></div></div>
      <div class="line"><svg viewBox="0 0 36 40"><path d="M1 9H35V31H1ZM1 13L18 22 35 13"/></svg><a href="mailto:contact@morrison.kz">contact@morrison.kz</a></div>
    </div>
  </div>
</footer>
</body>
</html>
```
FILE: styles.css
```css
* { box-sizing: border-box; margin: 0; padding: 0; }
body { font-family: Inter, "Noto Sans", sans-serif; font-size: 32px; line-height: 40px; color: #000; background: #f9f9f9; }
a { color: inherit; text-decoration: none; }
button, input { font: inherit; border: 0; }
.sprite { position: absolute; width: 0; height: 0; }
.container { max-width: 2560px; margin: 0 auto; padding: 0 100px; }

.header { background: #fff; }
.header-row { display: flex; align-items: center; justify-content: space-between; height: 200px; }
.logo { display: flex; flex-direction: column; width: 360px; padding-top: 2px; }
.logo-name { font: 700 33px/32px "DejaVu Sans", sans-serif; letter-spacing: 22px; white-space: nowrap; }
.logo-sub { font-size: 13px; line-height: 18px; letter-spacing: 3px; white-space: nowrap; }
.c-blue { color: #1e90ff; }
.c-yellow { color: #ffd000; }
.c-slate { color: #303c46; }
.nav { display: flex; gap: 96px; padding-top: 4px; font-size: 34px; }
.btn { display: block; min-width: 444px; height: 104px; padding-bottom: 2px; border-radius: 12px; background: #0054db; color: #fff; font-size: 31px; box-shadow: 4px 6px 16px rgba(60, 50, 255, .3); cursor: pointer; }

.main { padding-bottom: 129px; }
.title { padding-top: 98px; font-size: 86px; line-height: 112px; font-weight: 700; color: #181818; }
.contact-row { display: grid; grid-template-columns: 1fr 1fr; margin-top: 104px; }
.address { font-size: 36px; line-height: 50px; color: #181818; }
.details { margin-top: 71px; }
.details dt { font-size: 31px; line-height: 40px; color: #181818; }
.details dd { padding: 10px 0 36px; font-size: 36px; line-height: 56px; font-weight: 700; }
.social-title { font-size: 31px; color: #666; }
.social { display: flex; gap: 20px; margin-top: 49px; color: #999; }
.social a, .social svg { display: block; width: 72px; height: 72px; }
.form { display: flex; flex-direction: column; gap: 32px; }
.form h2 { margin: 2px 0 18px; font-size: 66px; line-height: 88px; font-weight: 700; color: #181818; }
.form input { width: 100%; height: 110px; padding: 0 50px 4px; border-radius: 12px; background: #fff; color: #000; font-size: 34px; box-shadow: 0 4px 20px rgba(0, 0, 0, .08); }
.form input::placeholder { color: #000; opacity: 1; }

.map { position: relative; height: 800px; overflow: hidden; background: #fbfdf6; }
.map-svg { display: block; width: 100%; height: 100%; }
.geo path, .geo ellipse, .geo circle { vector-effect: non-scaling-stroke; }
.stream { fill: none; stroke: #a3d6f5; stroke-width: 2px; }
.foot { fill: none; stroke: #b9b9bd; stroke-width: 1px; stroke-dasharray: 12 4; }
.small-case, .small-fill, .mid-case, .mid-fill, .yellow-case, .yellow-fill { fill: none; stroke-linejoin: round; }
.small-case { stroke: #b9b9bb; stroke-width: 11px; }
.small-fill { stroke: #fff; stroke-width: 9px; }
.mid-case { stroke: #b9b9bb; stroke-width: 16px; }
.mid-fill { stroke: #fff; stroke-width: 14px; }
.yellow-case { stroke: #fdcf86; stroke-width: 18px; }
.yellow-fill { stroke: #fff5b5; stroke-width: 16px; }
.avenue { fill: #fff5b5; stroke: #fdcf86; stroke-width: 1px; }
.median { fill: none; stroke: #fdcf86; stroke-width: 4px; }
.median-light { fill: none; stroke: #fff; stroke-width: 2px; }
.cross { fill: none; stroke: #b9b9bb; stroke-width: 11px; stroke-dasharray: 2 4; }
.arrow { fill: none; stroke: #a09d95; stroke-width: 2px; }
.tall-shadow, .low-shadow { fill: #d5d1cd; }
.lilac-shadow { fill: #cfd0db; }
.roof { fill: #e8e3e0; }
.lilac { fill: #dedfe6; }
.seam { fill: none; stroke: #d5d1cd; stroke-width: 1px; }
.num, .poi, .estate, .street { font-family: "Noto Sans", "Open Sans", sans-serif; paint-order: stroke; stroke-linejoin: round; }
.num { font-size: 20px; fill: #85827f; text-anchor: middle; stroke: rgba(255, 255, 255, .5); stroke-width: 2px; }
.poi { font-size: 22px; font-weight: 500; text-anchor: middle; stroke: #fff; stroke-width: 3px; }
.estate { font-size: 26px; fill: #9a9bbd; text-anchor: middle; stroke: rgba(255, 255, 255, .6); stroke-width: 2px; }
.street { fill: #33343a; stroke: #fff; stroke-width: 4px; }
.st-l { font-size: 30px; }
.st-s { font-size: 23px; }
.st-xs { font-size: 20px; }
.st-river { font-size: 26px; fill: #2b63b5; font-style: italic; }
.dot { stroke: #fff; stroke-width: 2px; }
.route { position: absolute; left: 16px; bottom: 16px; display: flex; align-items: center; gap: 12px; height: 48px; padding: 0 12px; border-radius: 6px; background: #fff; font: 24px/48px "Liberation Sans", Arial, sans-serif; box-shadow: 0 2px 6px rgba(0, 0, 0, .3); white-space: nowrap; }
.route svg { width: 28px; height: 36px; }
.create-map, .copyright-map { position: absolute; font: 22px/32px "DejaVu Sans", sans-serif; background: rgba(255, 255, 255, .6); border-radius: 6px; padding: 0 8px; white-space: nowrap; }
.create-map, .copyright-map a { text-decoration: underline; text-underline-offset: 4px; }
.create-map { left: 256px; bottom: 24px; font-size: 23px; }
.copyright-map { right: 6px; bottom: 18px; }

.footer { padding: 94px 0 158px; background: #2b2b35; color: #fff; }
.footer-grid { display: grid; grid-template-columns: 640fr 417fr 522fr 405fr 376fr; }
.footer-brand { padding-top: 40px; }
.logo-light { padding-left: 6px; }
.logo-light .logo-name { letter-spacing: 21px; }
.logo-light .logo-sub { color: #c8c8cc; }
.copy { margin-top: 34px; font-size: 26px; line-height: 40px; }
.footer-social-title { margin-top: 92px; font-size: 31px; line-height: 42px; color: #bbb; }
.footer-social { display: flex; gap: 20px; margin-top: 48px; }
.footer-social a { display: flex; align-items: center; justify-content: center; width: 72px; height: 72px; border-radius: 50%; background: #f9f9f9; color: #999; }
.footer-social svg { width: 42px; height: 42px; }
.footer-col { display: flex; flex-direction: column; min-width: 0; font-size: 30px; line-height: 40px; white-space: nowrap; }
.footer-col h3 { margin-bottom: 33px; font-size: 38px; line-height: 48px; font-weight: 700; }
.footer-col > a { margin-bottom: 32px; }
.line { display: flex; gap: 36px; margin-bottom: 32px; }
.line svg { flex: none; width: 36px; height: 40px; fill: none; stroke: #fff; stroke-width: 2px; }
.line address { font-style: normal; }
.phones > div { display: flex; flex-direction: column; gap: 12px; }
.phones { margin-bottom: 44px; }
```
